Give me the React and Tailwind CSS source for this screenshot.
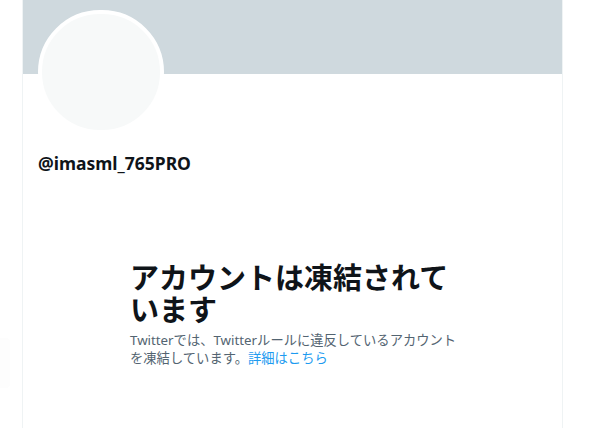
export default function App() {
  return (
    <div
      className="w-[590px] h-[428px] bg-white flex overflow-hidden"
      style={{ fontFamily: '"Noto Sans", "Noto Sans CJK JP", sans-serif' }}
    >
      {/* faint edge of something floating off the left side */}
      <div className="w-[22px] flex flex-col">
        <div className="h-[338px]" />
        <div className="w-[10px] h-[50px] bg-[#fdfdfd] rounded-r" />
      </div>

      <div className="w-[541px] border-x border-[#eff3f4] flex flex-col">
        {/* header banner */}
        <div className="h-[74px] bg-[#cfd9de]" />

        {/* avatar + handle */}
        <div className="pl-[15px]">
          <div className="-mt-[64px] w-[126px] h-[124px] rounded-full border-[4px] border-white bg-[#f7f9f9]" />
          <div className="mt-[18px] text-[17.5px] leading-[22px] font-bold text-[#0f1419]">
            @imasml_765PRO
          </div>
        </div>

        {/* suspended notice */}
        <div className="mt-[86px] pl-[107px] w-[440px]">
          <h2
            className="text-[29px] leading-[32px] font-bold text-[#0f1419]"
            style={{ fontFamily: '"Noto Sans CJK JP", sans-serif' }}
          >
            アカウントは凍結されています
          </h2>
          <p className="mt-[7px] text-[13.3px] leading-[18px] text-[#536471]">
            Twitterでは、Twitterルールに違反しているアカウントを凍結しています。
            <span className="text-[#1d9bf0]">詳細はこちら</span>
          </p>
        </div>
      </div>
    </div>
  );
}
